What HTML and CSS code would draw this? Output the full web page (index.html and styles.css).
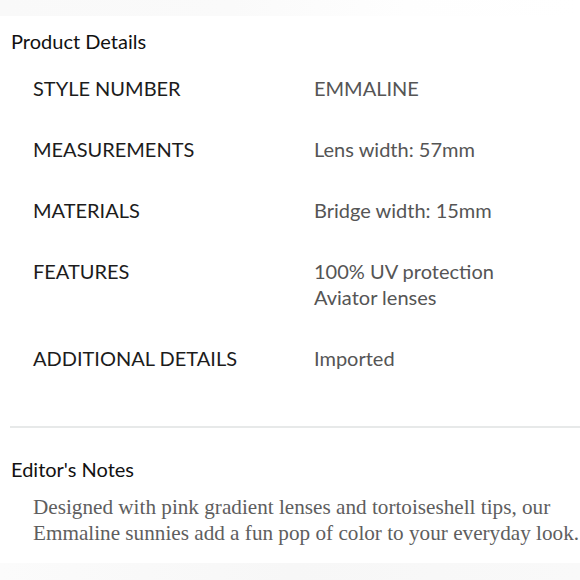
FILE: index.html
```html
<!DOCTYPE html>
<html>
<head>
<meta charset="utf-8">
<link rel="stylesheet" href="styles.css">
</head>
<body>
<div class="top-band"></div>
<section class="details">
  <h2 class="heading">Product Details</h2>
  <div class="spec">
    <div class="label">STYLE NUMBER</div>
    <div class="value">EMMALINE</div>
    <div class="label">MEASUREMENTS</div>
    <div class="value">Lens width: 57mm</div>
    <div class="label">MATERIALS</div>
    <div class="value">Bridge width: 15mm</div>
    <div class="label">FEATURES</div>
    <div class="value">100% UV protection<br>Aviator lenses</div>
    <div class="label">ADDITIONAL DETAILS</div>
    <div class="value">Imported</div>
  </div>
</section>
<hr class="divider">
<section class="notes">
  <h2 class="heading">Editor's Notes</h2>
  <p class="notes-text">Designed with pink gradient lenses and tortoiseshell tips, our<br>Emmaline sunnies add a fun pop of color to your everyday look.</p>
</section>
<div class="bottom-band"></div>
</body>
</html>
```

FILE: styles.css
```css
html, body {
  margin: 0;
  padding: 0;
  background: #fff;
  width: 580px;
  height: 580px;
  overflow: hidden;
  position: relative;
}
body {
  font-family: Lato, "Liberation Sans", sans-serif;
  color: #1a1a1a;
}
.top-band {
  height: 16px;
  background: linear-gradient(90deg, #f9f9f9 0%, #fafafa 40%, #fefefe 70%, #fff 100%);
}
.heading {
  margin: 0;
  font-weight: 400;
  font-size: 20px;
  line-height: 26px;
  color: #111;
}
.details {
  padding: 12px 0 0 11px;
}
.spec {
  display: grid;
  grid-template-columns: 281px auto;
  row-gap: 35px;
  margin-top: 21px;
  padding-left: 22px;
  font-size: 20px;
  line-height: 26px;
}
.label {
  color: #1c1c1c;
}
.value {
  color: #555;
}
.divider {
  margin: 55px 0 0 10px;
  border: 0;
  height: 2px;
  background: #e7e9e9;
}
.notes {
  padding: 28px 0 0 11px;
}
.notes-text {
  margin: 12px 0 0 22px;
  font-family: "Liberation Serif", serif;
  font-size: 21.2px;
  line-height: 26px;
  color: #5e5e5e;
  white-space: nowrap;
}
.bottom-band {
  position: absolute;
  left: 0;
  right: 0;
  bottom: 0;
  height: 17px;
  background: linear-gradient(90deg, #fbfbfb, #f7f7f7 50%, #f9f9f9);
}
```
